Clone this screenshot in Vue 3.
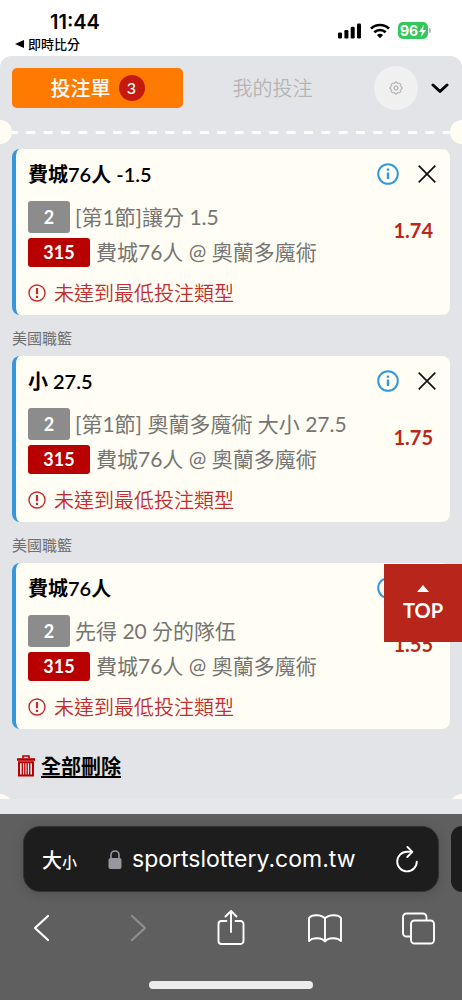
<script setup>
import { ref, computed } from 'vue'

/**
 * Selections on the slip
 */
const bets = ref([
  { id: 1, title: '費城76人 -1.5', market: '[第1節]讓分 1.5', odds: '1.74' },
  { id: 2, title: '小 27.5', market: '[第1節] 奧蘭多魔術 大小 27.5', odds: '1.75' },
  { id: 3, title: '費城76人', market: '先得 20 分的隊伍', odds: '1.55' }
])

const match = { code: '315', name: '費城76人 @ 奧蘭多魔術' }
const league = '美國職籃'
const address = ref('sportslottery.com.tw')

const count = computed(() => bets.value.length)

const removeBet = (id) => {
  bets.value = bets.value.filter((bet) => bet.id !== id)
}

const clearAll = () => {
  bets.value = []
}
</script>

<template>
  <div class="screen">
    <header class="status">
      <div class="status-left">
        <time class="clock">11:44</time>
        <a class="back-app" href="#">
          <svg width="9" height="8" viewBox="0 0 9 8"><path d="M0 4 9 0v8z" fill="#000" /></svg>
          即時比分
        </a>
      </div>
      <div class="status-icons">
        <svg width="24" height="16" viewBox="0 0 24 16">
          <rect x="0" y="9.500" width="4" height="6" rx="1.200" />
          <rect x="6.400" y="7" width="4" height="8.500" rx="1.200" />
          <rect x="12.700" y="3.800" width="4" height="11.700" rx="1.200" />
          <rect x="19" y="0.500" width="4" height="15" rx="1.200" />
        </svg>
        <svg width="20" height="16" viewBox="0 0 20 16" fill="none" stroke="#000" stroke-width="2.700">
          <path d="M1 5.600a13 13 0 0 1 18 0" />
          <path d="M4.300 9.300a8.200 8.200 0 0 1 11.400 0" />
          <path d="M10 15.200 6.900 12.100a4.500 4.500 0 0 1 6.200 0z" fill="#000" stroke="none" />
        </svg>
        <div class="battery">
          <span class="battery-level">96</span>
          <svg width="7" height="12" viewBox="0 0 7 12"><path d="M4.800 0 0 7h3L2 12l5-7H4z" fill="#fff" /></svg>
        </div>
      </div>
    </header>

    <main class="sheet">
      <div class="slip">
        <nav class="tabs">
          <button class="tab tab-active" type="button">
            投注單 <span class="count">{{ count }}</span>
          </button>
          <button class="tab" type="button">我的投注</button>
          <button class="settings" type="button" aria-label="設定">
            <svg width="14" height="14" viewBox="0 0 14 14" fill="none" stroke="#9a9a9a" stroke-width="0.900">
              <path d="M5.700 2.200 6.100 1h1.800l.4 1.200 1.100.5 1.200-.6 1.300 1.300-.6 1.200.5 1.100 1.200.4v1.800l-1.200.4-.5 1.100.6 1.200-1.300 1.300-1.200-.6-1.100.5-.4 1.200H6.100l-.4-1.200-1.100-.5-1.200.6-1.300-1.300.6-1.200-.5-1.100L1 7.900V6.100l1.200-.4.5-1.100-.6-1.200 1.300-1.300 1.200.6z" />
              <circle cx="7" cy="7" r="2" />
            </svg>
          </button>
          <button class="collapse" type="button" aria-label="收合">
            <svg width="18" height="12" viewBox="0 0 18 12" fill="none" stroke="#000" stroke-width="3" stroke-linecap="round" stroke-linejoin="round">
              <path d="M2 3 9 9.500 16 3" />
            </svg>
          </button>
        </nav>

        <div class="perforation">
          <span class="notch notch-left"></span>
          <svg width="100%" height="3"><line x1="9" y1="1.500" x2="100%" y2="1.500" stroke="#fffdf3" stroke-width="3" stroke-dasharray="9 8.350" /></svg>
          <span class="notch notch-right"></span>
        </div>

        <ul class="bets">
          <li v-for="(bet, index) in bets" :key="bet.id">
            <p v-if="index > 0" class="league">{{ league }}</p>
            <article class="card">
              <div class="card-head">
                <h2 class="title">{{ bet.title }}</h2>
                <button class="icon-btn" type="button" aria-label="資訊">
                  <svg width="22" height="22" viewBox="0 0 22 22" fill="none" stroke="#3498db">
                    <circle cx="11" cy="11" r="9.800" stroke-width="2" />
                    <path d="M11 9.500v6.500" stroke-width="2.400" />
                    <path d="M11 5.600v2.200" stroke-width="2.400" />
                  </svg>
                </button>
                <button class="icon-btn" type="button" aria-label="移除" @click="removeBet(bet.id)">
                  <svg width="18" height="18" viewBox="0 0 18 18" stroke="#111" stroke-width="1.700">
                    <path d="M.7.700 17.300 17.300M17.300.700.700 17.300" />
                  </svg>
                </button>
              </div>
              <div class="card-body">
                <div class="lines">
                  <p class="line market"><span class="tag tag-grey">2</span>{{ bet.market }}</p>
                  <p class="line match"><span class="tag tag-red">{{ match.code }}</span>{{ match.name }}</p>
                </div>
                <strong class="odds">{{ bet.odds }}</strong>
              </div>
              <p class="error">
                <svg width="18" height="18" viewBox="0 0 18 18" fill="none" stroke="#c42d2d">
                  <circle cx="9" cy="9" r="8" stroke-width="1.400" />
                  <path d="M9 4v6.200M9 11.800v2.200" stroke-width="2.200" />
                </svg>
                未達到最低投注類型
              </p>
            </article>
          </li>
        </ul>

        <button class="clear" type="button" @click="clearAll">
          <svg width="18" height="22" viewBox="0 0 18 22" fill="none" stroke="#b80000">
            <path d="M0 4.500h18" stroke-width="2.600" />
            <path d="M6 3.500V1h6v2.500" stroke-width="1.600" />
            <path d="M2 7.200h14V20.500H2z" stroke-width="2" />
            <path d="M5.300 8v12M7.800 8v12M10.200 8v12M12.700 8v12" stroke-width="1.300" />
          </svg>
          <span class="clear-text">全部刪除</span>
        </button>
        <span class="notch notch-left notch-end"></span>
        <span class="notch notch-right notch-end"></span>
      </div>

      <button class="top" type="button">
        <svg width="12" height="7" viewBox="0 0 12 7"><path d="M0 7 6 0l6 7z" fill="#fff" /></svg>
        TOP
      </button>
    </main>

    <footer class="browser">
      <div class="address-row">
        <div class="address">
          <button class="reader" type="button"><span class="big">大</span><span class="small">小</span></button>
          <svg width="14" height="19" viewBox="0 0 14 19">
            <path d="M3 9V5a4 4 0 0 1 8 0V9" fill="none" stroke="#98979f" stroke-width="1.600" />
            <rect x="0.500" y="8" width="13" height="11" rx="2" fill="#98979f" />
          </svg>
          <input v-model="address" class="url" type="text" aria-label="網址" />
          <button class="icon-btn" type="button" aria-label="重新載入">
            <svg width="22" height="27" viewBox="0 0 22 27" fill="none" stroke="#fff" stroke-width="1.900" stroke-linecap="round" stroke-linejoin="round">
              <path d="M15.500 5.800H11A9.800 9.800 0 1 0 20.800 15.600" />
              <path d="M11.500 1 16.300 5.800 11.300 11" />
            </svg>
          </button>
        </div>
        <div class="next-tab"></div>
      </div>
      <nav class="toolbar">
        <button class="icon-btn" type="button" aria-label="上一頁">
          <svg width="34" height="36" viewBox="0 0 34 36" fill="none" stroke="#fff" stroke-width="2.200" stroke-linecap="round" stroke-linejoin="round"><path d="M23 6 10 18l13 12" /></svg>
        </button>
        <button class="icon-btn" type="button" aria-label="下一頁">
          <svg width="34" height="36" viewBox="0 0 34 36" fill="none" stroke="#8f8f8f" stroke-width="2.200" stroke-linecap="round" stroke-linejoin="round"><path d="m13 6 13 12-13 12" /></svg>
        </button>
        <button class="icon-btn" type="button" aria-label="分享">
          <svg width="34" height="36" viewBox="0 0 34 36" fill="none" stroke="#fff" stroke-width="1.900" stroke-linecap="round" stroke-linejoin="round">
            <path d="M12.500 11H7.500a3 3 0 0 0-3 3v17a3 3 0 0 0 3 3h19a3 3 0 0 0 3-3V14a3 3 0 0 0-3-3h-5" />
            <path d="M17 22V1M11.500 6.500 17 1l5.500 5.500" />
          </svg>
        </button>
        <button class="icon-btn" type="button" aria-label="書籤">
          <svg width="34" height="36" viewBox="0 0 34 36" fill="none" stroke="#fff" stroke-width="1.900" stroke-linejoin="round">
            <path d="M17 8.500C14.500 5 4.500 3.500 1 8v23c4-4 13-3.500 16 .5 3-4 12-4.500 16-.5V8c-3.500-4.500-13.500-3-16 .5zM17 8.500v23" />
          </svg>
        </button>
        <button class="icon-btn" type="button" aria-label="分頁">
          <svg width="34" height="36" viewBox="0 0 34 36" fill="none" stroke="#fff" stroke-width="1.900">
            <rect x="9" y="10.500" width="23" height="23" rx="3.500" />
            <path d="M9 26.500H4.500A3.500 3.500 0 0 1 1 23V7A3.500 3.500 0 0 1 4.500 3.500h16.500A3.500 3.500 0 0 1 24.500 7v3.500" />
          </svg>
        </button>
      </nav>
      <div class="home-bar"></div>
    </footer>
  </div>
</template>

<style>
body {
  margin: 0;
  background: #fff;
}
</style>

<style scoped>
.screen {
  min-height: 100vh;
  display: flex;
  flex-direction: column;
  font-family: Lato, 'Noto Sans CJK TC', sans-serif;
  color: #000;
}

button {
  display: flex;
  align-items: center;
  justify-content: center;
  padding: 0;
  border: 0;
  background: none;
  color: inherit;
  font: inherit;
}

svg {
  display: block;
  flex: none;
}

p,
h2,
ul {
  margin: 0;
  padding: 0;
  list-style: none;
}

/* status bar */
.status {
  height: 56px;
  display: flex;
  justify-content: space-between;
  font-family: Inter, 'Noto Sans CJK TC', sans-serif;
}

.status-left {
  padding: 10px 0 0 15px;
}

.clock {
  display: block;
  padding-left: 35px;
  font-size: 20px;
  line-height: 24px;
  font-weight: 600;
}

.back-app {
  display: flex;
  align-items: center;
  gap: 4px;
  color: #000;
  font-size: 13px;
  line-height: 20px;
  font-weight: 500;
  text-decoration: none;
}

.status-icons {
  display: flex;
  align-items: center;
  gap: 8px;
  height: 61px;
  padding-right: 34px;
}

.battery {
  position: relative;
  display: flex;
  align-items: center;
  justify-content: center;
  gap: 1px;
  width: 30px;
  height: 17px;
  border-radius: 5px;
  background: #34c759;
  color: #fff;
}

.battery::after {
  content: '';
  position: absolute;
  right: -3px;
  width: 2px;
  height: 5px;
  border-radius: 0 2px 2px 0;
  background: #b8b8b8;
}

.battery-level {
  font-size: 14px;
  line-height: 17px;
  font-weight: 700;
}

/* slip */
.sheet {
  position: relative;
  flex: 1;
  border-radius: 12px 12px 0 0;
  background: #e6e7ea;
}

.slip {
  position: relative;
  overflow: hidden;
  padding: 12px 12px 18px;
  border-radius: 12px 12px 0 0;
  background: #e3e4e7;
}

.tabs {
  display: flex;
  align-items: center;
  gap: 4px;
  height: 40px;
}

.tab {
  flex: 1;
  height: 40px;
  border-radius: 5px;
  color: #b4b5b7;
  font-size: 20px;
  line-height: 28px;
  font-weight: 350;
}

.tab-active {
  gap: 8px;
  background: #ff7a00;
  color: #fff;
  font-weight: 500;
}

.count {
  width: 26px;
  border-radius: 50%;
  background: #c41a12;
  font-size: 16px;
  line-height: 26px;
}

.settings {
  width: 44px;
  height: 44px;
  margin-left: 12px;
  border-radius: 50%;
  background: #f0f0f0;
}

.collapse {
  width: 18px;
  margin: 0 1px 0 9px;
}

.perforation {
  position: relative;
  margin: 23px -12px 15px;
}

.notch {
  position: absolute;
  top: -11px;
  width: 24px;
  height: 24px;
  border-radius: 50%;
  background: #fffdf3;
}

.notch-left {
  left: -12px;
}

.notch-right {
  right: -12px;
}

.notch-end {
  top: auto;
  bottom: -19px;
}

.league {
  padding: 11px 0 5px;
  color: #6f6f70;
  font-size: 15px;
  line-height: 25px;
}

.card {
  padding: 10px 14px 6px 12px;
  border-left: 4px solid #3498db;
  border-radius: 8px;
  background: #fffdf4;
}

.card-head {
  display: flex;
  align-items: center;
  gap: 19px;
  height: 30px;
}

.title {
  flex: 1;
  font-size: 20px;
  line-height: 30px;
  font-weight: 600;
}

.card-body {
  display: flex;
  align-items: center;
  justify-content: space-between;
  padding: 12px 3px 11px 0;
}

.line {
  display: flex;
  align-items: center;
  color: #757573;
  font-size: 20px;
  line-height: 32px;
  font-weight: 400;
}

.market {
  gap: 5px;
}

.match {
  gap: 6px;
  margin-top: 4px;
  line-height: 30px;
}

.tag {
  border-radius: 3px;
  color: #fff;
  font-size: 18px;
  font-weight: 700;
  text-align: center;
}

.tag-grey {
  width: 42px;
  line-height: 32px;
  background: #8c8c8c;
}

.tag-red {
  width: 62px;
  line-height: 29px;
  background: #b80000;
}

.line {
  font-size: 21px;
}

.odds {
  padding-bottom: 8px;
  color: #bb261a;
  font-size: 20px;
  line-height: 24px;
}

.error {
  display: flex;
  align-items: center;
  gap: 8px;
  padding-bottom: 1px;
  color: #c42d2d;
  font-size: 20px;
  line-height: 30px;
  font-weight: 350;
}

.clear {
  gap: 6px;
  margin: 22px 0 0 5px;
  font-size: 20px;
  line-height: 30px;
  font-weight: 700;
}

.clear-text {
  text-decoration: underline;
  text-decoration-thickness: 2px;
  text-underline-offset: 2px;
}

/* lies over the list */
.top {
  position: absolute;
  right: 0;
  bottom: 172px;
  flex-direction: column;
  gap: 6px;
  width: 78px;
  height: 78px;
  background: #b8261b;
  color: #fff;
  font-size: 20px;
  line-height: 24px;
  font-weight: 700;
}

/* browser bars */
.browser {
  display: flex;
  flex-direction: column;
  height: 186px;
  background: #5f5f5f;
  font-family: Inter, 'Noto Sans CJK TC', sans-serif;
  color: #fff;
}

.address-row {
  display: flex;
  gap: 12px;
  padding: 12px 0 0 23px;
}

.address {
  flex: 1;
  min-width: 0;
  display: flex;
  align-items: center;
  box-sizing: border-box;
  height: 66px;
  padding: 0 20px 0 18px;
  border: 1px solid #333;
  border-radius: 17px;
  background: #1d1d1d;
  box-shadow: 0 2px 12px rgba(0, 0, 0, 0.15);
}

.next-tab {
  width: 11px;
  border-radius: 17px 0 0 17px;
  background: #1d1d1d;
}

.reader {
  align-items: baseline;
  margin-right: 31px;
  font-weight: 500;
}

.big {
  font-size: 20px;
}

.small {
  font-size: 15px;
}

.url {
  flex: 1;
  min-width: 0;
  padding: 0 0 0 10px;
  border: 0;
  outline: 0;
  background: none;
  color: #fff;
  font-family: Inter, sans-serif;
  font-size: 23px;
  line-height: 32px;
}

.toolbar {
  display: flex;
  justify-content: space-between;
  padding: 18px 26px 0 25px;
}

.home-bar {
  width: 164px;
  height: 8px;
  margin: auto auto 11px;
  border-radius: 4px;
  background: #ececec;
}
</style>
